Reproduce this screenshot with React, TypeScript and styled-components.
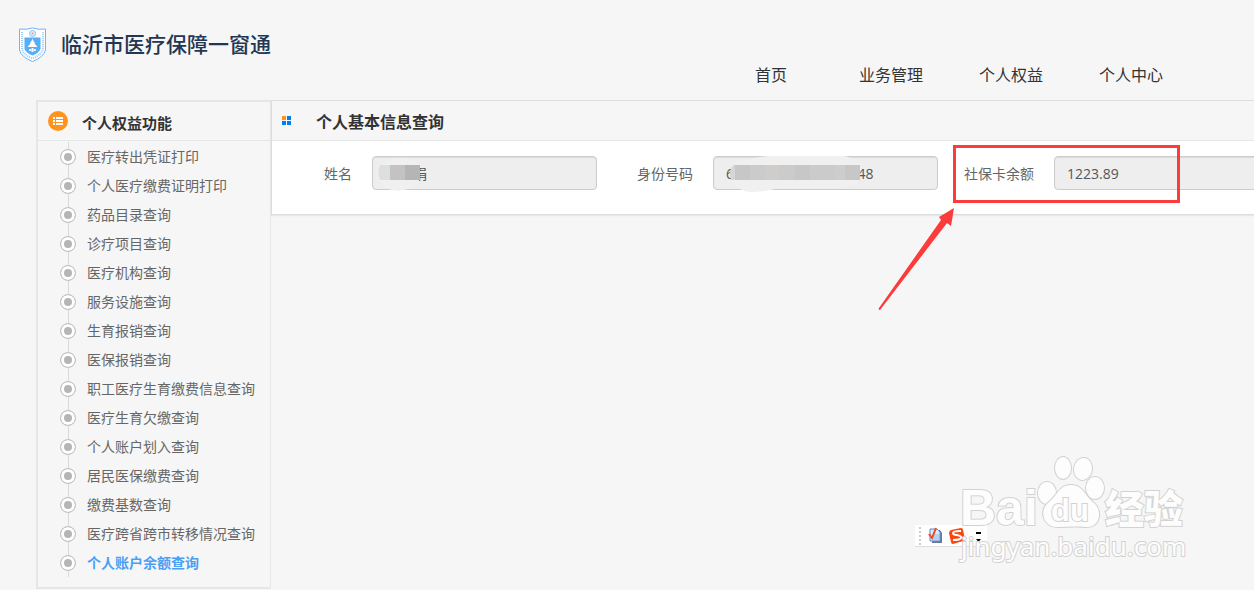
import React from "react";
import styled, { createGlobalStyle } from "styled-components";

const Global = createGlobalStyle`
  * { box-sizing: border-box; }
  html { background: #f6f6f6; overflow: hidden; }
  body {
    margin: 0;
    color: #333;
    font-family: "Open Sans", "Noto Sans CJK SC", sans-serif;
    font-size: 14px;
  }
`;

const Page = styled.div`
  position: relative;
  min-height: 100vh;
  overflow: hidden;
  background: #f6f6f6;
`;

const Header = styled.header`
  display: flex;
  justify-content: space-between;
  align-items: flex-start;
  height: 100px;
  padding: 0 63px 0 18px;
`;

const Brand = styled.a`
  display: flex;
  align-items: center;
  gap: 14px;
  height: 90px;
  color: #233754;
  font-size: 21px;
  font-weight: 500;
  text-decoration: none;
`;

const BrandName = styled.span`
  padding-bottom: 4px;
`;

const Nav = styled.nav`
  display: flex;
  padding-top: 60px;
`;

const NavLink = styled.a`
  width: 120px;
  color: #333;
  font-size: 16px;
  line-height: 30px;
  text-align: center;
  text-decoration: none;
`;

const Columns = styled.div`
  display: flex;
  align-items: flex-start;
  padding-left: 36px;
`;

const Sidebar = styled.aside`
  flex: 0 0 235px;
  border: 2px solid #e6e6e6;
  border-right-width: 1px;
`;

const SideHead = styled.div`
  display: flex;
  align-items: center;
  gap: 14px;
  height: 39px;
  padding-left: 10px;
  border-bottom: 1px solid #e6e6e6;
`;

const SideTitle = styled.h2`
  margin: 0;
  padding-top: 4px;
  font-size: 15px;
  line-height: 20px;
`;

const Menu = styled.ul`
  margin: 1px 0 10px;
  padding: 0;
  list-style: none;
`;

const MenuItem = styled.li`
  display: flex;
  align-items: center;
  gap: 11px;
  height: 29px;
  padding-left: 22px;
  background: linear-gradient(#d9d9d9, #d9d9d9) 30px 0 / 1px 100% no-repeat;
`;

const Dot = styled.span`
  width: 16px;
  height: 16px;
  border: 1px solid #c4c4c4;
  border-radius: 50%;
  background: #b5b5b5;
  box-shadow: inset 0 0 0 3px #fff;
`;

const MenuLink = styled.a<{ $active?: boolean }>`
  color: ${(p) => (p.$active ? "#4a9ff5" : "#666")};
  font-weight: ${(p) => (p.$active ? 700 : 400)};
  line-height: 20px;
  text-decoration: none;
  white-space: nowrap;
`;

const Main = styled.main`
  flex: 1;
  min-width: 0;
  border: solid #ddd;
  border-width: 1px 0 1px 1px;
  box-shadow: 0 1px 1px #e8e8e8;
`;

const PanelHead = styled.div`
  display: flex;
  align-items: center;
  gap: 24px;
  height: 40px;
  padding-left: 10px;
  border-bottom: 1px solid #e6e6e6;
`;

const PanelTitle = styled.h1`
  margin: 0;
  padding-top: 2px;
  font-size: 16px;
  line-height: 24px;
`;

const Form = styled.form`
  display: flex;
  gap: 16px;
  height: 73px;
  padding-top: 15px;
  background: #fff;
`;

const Field = styled.div`
  position: relative;
  display: flex;
  flex: 0 0 325px;
  height: 34px;
`;

const Label = styled.label`
  flex: 0 0 80px;
  margin-right: 20px;
  color: #666;
  line-height: 36px;
  text-align: right;
`;

const Input = styled.input`
  width: 225px;
  height: 34px;
  padding: 0 12px;
  border: 1px solid #ccc;
  border-radius: 4px;
  background: #eee;
  box-shadow: inset 0 1px 1px rgba(0, 0, 0, 0.08);
  color: #555;
  font: inherit;
  outline: none;
`;

const NameMask = styled.svg`
  position: absolute;
  left: 104px;
  top: 0;
`;

const IdMask = styled.svg`
  position: absolute;
  left: 112px;
  top: 0;
`;

const Highlight = styled.div`
  position: absolute;
  left: -1px;
  top: -11px;
  width: 227px;
  height: 58px;
  border: 3px solid #fc3b3b;
`;

const Arrow = styled.svg`
  position: absolute;
  left: -77px;
  top: 52px;
`;

const ImeBar = styled.div`
  position: absolute;
  left: 915px;
  top: 525px;
`;

const Watermark = styled.svg`
  position: absolute;
  left: 950px;
  top: 450px;
`;

const menu = [
  "医疗转出凭证打印",
  "个人医疗缴费证明打印",
  "药品目录查询",
  "诊疗项目查询",
  "医疗机构查询",
  "服务设施查询",
  "生育报销查询",
  "医保报销查询",
  "职工医疗生育缴费信息查询",
  "医疗生育欠缴查询",
  "个人账户划入查询",
  "居民医保缴费查询",
  "缴费基数查询",
  "医疗跨省跨市转移情况查询",
  "个人账户余额查询",
];

const Shield = () => (
  <svg width="29" height="36" viewBox="0 0 29 36" fill="none">
    <path d="M1.500 2Q8 3 14.500 1Q21 3 27.500 2V23Q26 30 14.500 34.500Q3 30 1.500 23Z" fill="#fff" stroke="#6db5f6" />
    <path d="M4 5V22Q5.500 28 14.500 31.500Q23.500 28 25 22V5" stroke="#9bcbf8" strokeWidth="2" strokeDasharray="1 1" />
    <path d="M6.500 10.500H22.500V22Q20.500 26 14.500 28.500Q8.500 26 6.500 22Z" fill="#56aef9" />
    <circle cx="14.500" cy="6.500" r="3" fill="#d8ecfd" stroke="#8bc3f8" />
    <circle cx="14.500" cy="6.500" r="1" fill="#e99" />
    <path d="M14.500 11.500L16 15L17 15.500L16.500 16.500L19.500 20H9.500L12.500 16.500L12 15.500L13 15Z" fill="#fff" />
    <path d="M11 23Q14.500 20.500 18 23Q14.500 25.500 11 23ZM14.500 21V25" stroke="#fff" />
  </svg>
);

export default function App() {
  return (
    <>
      <Global />
      <Page>
        <Header>
          <Brand href="#">
            <Shield />
            <BrandName>临沂市医疗保障一窗通</BrandName>
          </Brand>
          <Nav>
            {["首页", "业务管理", "个人权益", "个人中心"].map((t) => (
              <NavLink href="#" key={t}>{t}</NavLink>
            ))}
          </Nav>
        </Header>
        <Columns>
          <Sidebar>
            <SideHead>
              <svg width="20" height="20" viewBox="0 0 20 20">
                <circle cx="10" cy="10" r="10" fill="#ff931e" />
                <path d="M5 6h2v2H5zM8 6h7v2H8zM5 9h2v2H5zM8 9h7v2H8zM5 12h2v2H5zM8 12h7v2H8z" fill="#fff" />
              </svg>
              <SideTitle>个人权益功能</SideTitle>
            </SideHead>
            <Menu>
              {menu.map((t, i) => (
                <MenuItem key={t}>
                  <Dot />
                  <MenuLink href="#" $active={i === menu.length - 1}>{t}</MenuLink>
                </MenuItem>
              ))}
            </Menu>
          </Sidebar>
          <Main>
            <PanelHead>
              <svg width="10" height="10" viewBox="0 0 10 10">
                <path d="M0 0h4v4H0z" fill="#ff931e" />
                <path d="M5 0h4v4H5zM0 5h4v4H0zM5 5h4v4H5z" fill="#0080f0" />
              </svg>
              <PanelTitle>个人基本信息查询</PanelTitle>
            </PanelHead>
            <Form>
              <Field>
                <Label htmlFor="name">姓名</Label>
                <Input id="name" readOnly defaultValue="＊＊娟" />
                <NameMask width="44" height="36" viewBox="0 0 44 36">
                  <path d="M2 18Q3 8 14 3Q26 0 37 4Q44 8 43 14V22Q42 30 32 33Q20 37 10 32Q3 27 2 18Z" fill="#f0f0f0" />
                  <path d="M4 9h10v15H4Q1 17 4 9Z" fill="#dcdfde" />
                  <path d="M14 9h15v15H14z" fill="#c4c3c2" />
                  <path d="M29 9h15v15H29z" fill="#b5b5b5" />
                </NameMask>
              </Field>
              <Field>
                <Label htmlFor="idno">身份号码</Label>
                <Input id="idno" readOnly defaultValue="6****************48" />
                <IdMask width="138" height="38" viewBox="0 0 138 38">
                  <path d="M6 9Q18 2 44 0H120Q132 3 134 9V25Q128 31 115 32H54Q38 36 25 36Q10 34 6 24Z" fill="#f0f0f0" />
                  <path d="M8 9h14v15H6Q3 16 8 9Z" fill="#d6d6d6" />
                  <path d="M10 9h125v15H10z" fill="#cbcbcb" />
                  <path d="M10 9h15v15H10zM70 9h15v15H70zM120 9h15v15h-15z" fill="#c7c7c7" />
                  <path d="M40 9h14v15H40zM110 9h10v15h-10z" fill="#cfcdcb" />
                </IdMask>
              </Field>
              <Field>
                <Label htmlFor="balance">社保卡余额</Label>
                <Input id="balance" readOnly defaultValue="1223.89" />
                <Highlight />
                <Arrow width="80" height="104" viewBox="0 0 80 104">
                  <path d="M77 0L74 18L70 15L3 102Q1 102 2 100L64 12L62 9Z" fill="#fc3b3b" />
                </Arrow>
              </Field>
            </Form>
          </Main>
        </Columns>
        <ImeBar>
          <svg width="73" height="22" viewBox="0 0 73 22">
            <path d="M0 0h72v21H0z" fill="#fff" />
            <path d="M0 21.500h68" stroke="#ddd" />
            <path d="M5 2V21" stroke="#999" strokeDasharray="2 2" />
            <path d="M17 5h8l2 3v10H17z" fill="#6879a0" />
            <path d="M15 4h7l3 3v9H15z" fill="#d9ebff" stroke="#6388bd" />
            <path d="M17 10h7M17 12h7M17 14h7" stroke="#8fb7e6" />
            <path d="M14 9l3 4l4-10" fill="none" stroke="#f04a22" strokeWidth="2" />
            <path d="M36 5L46 3Q48 3 48 5L50 14Q50 16 48 16L38 19Q36 19 36 17L34 8Q34 6 36 5Z" fill="#f9480e" />
            <path d="M46 6Q38 6 38 8Q38 10 42 10Q47 11 46 13Q45 15 38 15" fill="none" stroke="#fff" strokeWidth="2" />
            <path d="M61 7h5v2h-5zM61 14h5l-2.500 3z" fill="#000" />
          </svg>
        </ImeBar>
        <Watermark width="245" height="120" viewBox="0 0 245 120">
          <g
            fill="#fdfdfd"
            stroke="#d2d2d2"
            strokeWidth="2"
            paintOrder="stroke"
            fontFamily='"Liberation Sans", "Noto Sans CJK SC", sans-serif'
            fontWeight="700"
          >
            <text x="10" y="75" fontSize="50">Bai</text>
            <ellipse cx="97" cy="43" rx="9" ry="11" />
            <ellipse cx="113" cy="18" rx="8" ry="11" />
            <ellipse cx="133" cy="19" rx="9" ry="11" transform="rotate(8 133 19)" />
            <ellipse cx="145" cy="38" rx="9" ry="11" />
            <path d="M121 35C109 35 107 46 99 52C88 61 94 77 107 77C116 77 126 76 136 77C150 78 153 61 144 53C135 46 133 35 121 35Z" />
            <text x="101" y="71" fontSize="31">du</text>
            <text x="155" y="73" fontSize="39" fontWeight="900">经验</text>
            <text x="11" y="106" fontSize="26" fontWeight="400" fontFamily='"Noto Sans", sans-serif'>jingyan.baidu.com</text>
          </g>
        </Watermark>
      </Page>
    </>
  );
}
